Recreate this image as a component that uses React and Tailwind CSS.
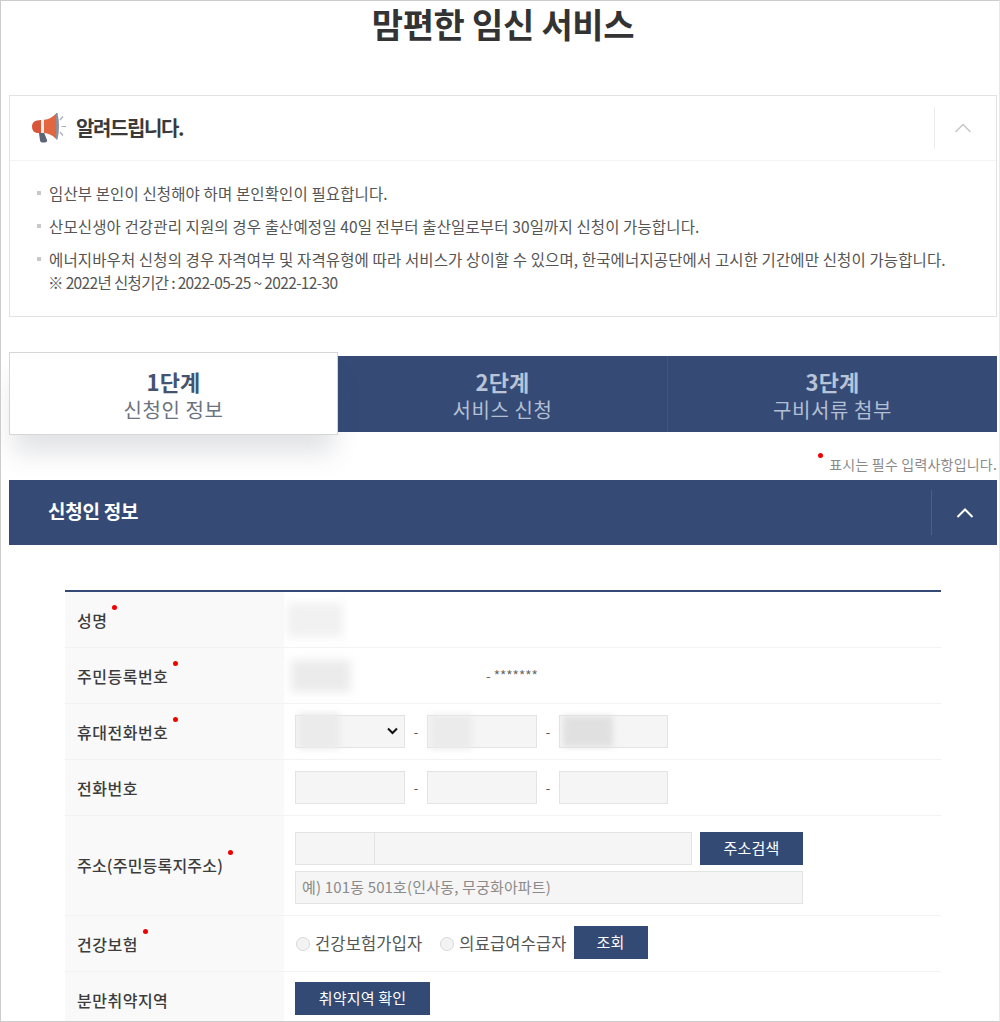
const Font = { fontFamily: '"Noto Sans CJK KR", "Noto Sans", sans-serif' };

function Megaphone() {
  return (
    <svg width="36" height="32" viewBox="0 0 36 32" className="shrink-0 -ml-[1px]">
      <path d="M8 21 L13 20.5 L16 28 Q16.5 30.5 13.5 30.5 L11 30.5 Q9.5 30.5 9 28.5 Z" fill="#5d6478" />
      <path d="M6 8.5 L10 8 L10 21 L6 21 Q1 20 1 14.5 Q1 9.5 6 8.5 Z" fill="#d9553a" />
      <path d="M10 8 L13 7.8 L13 21 L10 21 Z" fill="#f4efec" />
      <path d="M13 7.8 Q20 7 24.5 2 L25 2 L25 26.5 L24.5 26.5 Q20 21.5 13 21 Z" fill="#e2663f" />
      <path d="M25 1 L26.5 1 Q28 8 28 14 Q28 21 26.5 27.5 L25 27.5 Z" fill="#8a8f9c" />
      <path d="M29 8 L32 4.5 M30.5 14.5 L35 14.5 M29 20 L32 23.5" stroke="#a9adb5" strokeWidth="1.2" fill="none" />
    </svg>
  );
}

function Chevron({ color, width }) {
  return (
    <svg width="18" height="10" viewBox="0 0 18 10">
      <path d="M1.5 9 L9 1.5 L16.5 9" fill="none" stroke={color} strokeWidth={width} />
    </svg>
  );
}

function Dot() {
  return <span className="absolute top-[-3px] right-[-10px] w-[5px] h-[5px] rounded-full bg-[#f00000]" />;
}

function Label({ text, required, className = 'tracking-[0.5px]' }) {
  return (
    <div className="w-[219px] shrink-0 self-stretch bg-[#f9f9f9] flex items-center pl-[12px]">
      <span className={`relative text-[16px] font-medium text-[#3c3c3c] ${className}`}>
        {text}
        {required && <Dot />}
      </span>
    </div>
  );
}

function Row({ height, label, required, last, labelClass, children }) {
  return (
    <div className={`flex items-center ${height} ${last ? '' : 'border-b border-[#f3f3f3]'}`}>
      <Label text={label} required={required} className={labelClass} />
      <div className="flex-1 self-stretch flex items-center">{children}</div>
    </div>
  );
}

function Field({ className = 'w-[110px]', children }) {
  return <div className={`relative h-[33px] bg-[#f5f5f5] border border-[#e3e3e3] shrink-0 ${className}`}>{children}</div>;
}

function Dash() {
  return <span className="w-[22px] text-center text-[13px] text-[#555] shrink-0">-</span>;
}

function Blur({ className }) {
  return <div className={`absolute blur-[3px] ${className}`} />;
}

function Radio({ label }) {
  return (
    <div className="flex items-center gap-[5px]">
      <span className="w-[14px] h-[14px] rounded-full bg-[#f3f3f3] border border-[#d8d8d8]" />
      <span className="text-[16.5px] text-[#555] tracking-[0.15px]">{label}</span>
    </div>
  );
}

function Btn({ className, children }) {
  return (
    <div className={`h-[33px] bg-[#334a75] text-white text-[15px] flex items-center justify-center tracking-[0.2px] shrink-0 ${className}`}>
      {children}
    </div>
  );
}

function Bullet({ children, extra }) {
  return (
    <div className="flex items-start">
      <span className="w-[4px] h-[4px] bg-[#c8c8c8] mt-[7px] mr-[8px] shrink-0" />
      <div className="text-[15.5px] leading-[23px] text-[#555] tracking-[0.12px] -mt-[2px]">
        {children}
        {extra && <div className="tracking-[-0.65px] -ml-[1px]">{extra}</div>}
      </div>
    </div>
  );
}

function Step({ num, title, active, last }) {
  if (active) {
    return (
      <div className="relative z-10 w-[329px] h-[83px] bg-white border border-[#d6d6d6] shadow-[0_22px_24px_-4px_rgba(60,70,90,0.15)] flex flex-col items-center justify-center">
        <div className="text-[22px] leading-[32px] font-bold text-[#44536f] tracking-[0.2px]">{num}</div>
        <div className="text-[20px] leading-[26px] text-[#6b7280] tracking-[0.6px]">{title}</div>
      </div>
    );
  }
  return (
    <div className={`flex-1 h-[76px] mt-[4px] bg-[#354b76] flex flex-col items-center justify-center ${last ? '' : 'border-r border-[#3f5680]'}`}>
      <div className="text-[22px] leading-[32px] font-bold text-[#b9c4d6] tracking-[0.2px]">{num}</div>
      <div className="text-[20px] leading-[26px] text-[#b3bfd2] tracking-[0.6px]">{title}</div>
    </div>
  );
}

export default function App() {
  return (
    <div style={Font} className="w-[1000px] h-[1022px] overflow-hidden bg-white border-t border-b border-l border-r border-t-[#cccccc] border-b-[#cccccc] border-l-[#cccccc] border-r-[#e8e8e8] box-border pl-[8px] pr-[2px]">
      <h1 className="h-[94px] text-center text-[34px] leading-[46px] font-bold text-[#333] tracking-[-0.3px]">맘편한 임신 서비스</h1>

      <section className="h-[222px] border border-[#e2e2e2]">
        <div className="h-[65px] flex items-center border-b border-[#f3f3f3] pl-[22px]">
          <Megaphone />
          <span className="ml-[9px] text-[20px] font-bold text-[#3a3a3a] tracking-[-1.4px]">알려드립니다.</span>
          <div className="ml-auto h-[42px] w-[62px] border-l border-[#ececec] flex items-center justify-center pr-[6px]">
            <Chevron color="#c4c4c4" width="1.4" />
          </div>
        </div>
        <div className="pl-[27px] pt-[23px] flex flex-col gap-[12px]">
          <Bullet>임산부 본인이 신청해야 하며 본인확인이 필요합니다.</Bullet>
          <Bullet>산모신생아 건강관리 지원의 경우 출산예정일 40일 전부터 출산일로부터 30일까지 신청이 가능합니다.</Bullet>
          <Bullet extra="※ 2022년 신청기간 : 2022-05-25 ~ 2022-12-30">
            에너지바우처 신청의 경우 자격여부 및 자격유형에 따라 서비스가 상이할 수 있으며, 한국에너지공단에서 고시한 기간에만 신청이 가능합니다.
          </Bullet>
        </div>
      </section>

      <div className="mt-[35px] flex items-start h-[83px]">
        <Step num="1단계" title="신청인 정보" active />
        <Step num="2단계" title="서비스 신청" />
        <Step num="3단계" title="구비서류 첨부" last />
      </div>

      <div className="h-[45px] flex justify-end items-start pt-[19px]">
        <span className="relative text-[14px] leading-[20px] text-[#8a8a8a] tracking-[0.2px]">
          표시는 필수 입력사항입니다.
          <span className="absolute left-[-11px] top-[-1px] w-[5px] h-[5px] rounded-full bg-[#f00000]" />
        </span>
      </div>

      <div className="h-[65px] bg-[#354b76] flex items-center pl-[39px]">
        <span className="text-[19px] font-bold text-white tracking-[-0.25px] pb-[2px]">신청인 정보</span>
        <div className="ml-auto h-[45px] w-[66px] border-l border-[#47608c] flex items-center justify-center">
          <Chevron color="#ffffff" width="2" />
        </div>
      </div>

      <div className="ml-[56px] w-[876px] mt-[45px] border-t-2 border-[#354b76]">
        <Row height="h-[56px]" label="성명" required>
          <div className="ml-[3px] w-[56px] h-[34px] bg-[#f1f1f1] blur-[5px]" />
        </Row>
        <Row height="h-[56px]" label="주민등록번호" required>
          <div className="ml-[7px] w-[60px] h-[32px] bg-[#ebebeb] blur-[5px]" />
          <span className="ml-[135px] text-[13.5px] text-[#666]">- *******</span>
        </Row>
        <Row height="h-[56px]" label="휴대전화번호" required>
          <div className="ml-[11px] flex items-center">
            <Field>
              <Blur className="left-[2px] top-[-3px] w-[42px] h-[36px] bg-[#ebebeb]" />
              <svg className="absolute right-[6px] top-[11px]" width="11" height="8" viewBox="0 0 11 8">
                <path d="M1 1.5 L5.5 6 L10 1.5" fill="none" stroke="#111" strokeWidth="2" />
              </svg>
            </Field>
            <Dash />
            <Field>
              <Blur className="left-[2px] top-[-1px] w-[42px] h-[34px] bg-[#ebebeb]" />
            </Field>
            <Dash />
            <Field className="w-[109px]">
              <Blur className="left-[3px] top-[0px] w-[50px] h-[31px] bg-[#e0e0e0]" />
            </Field>
          </div>
        </Row>
        <Row height="h-[56px]" label="전화번호">
          <div className="ml-[11px] flex items-center">
            <Field />
            <Dash />
            <Field />
            <Dash />
            <Field className="w-[109px]" />
          </div>
        </Row>
        <Row height="h-[100px]" label="주소(주민등록지주소)" required labelClass="tracking-[0.2px] pb-[2px]">
          <div className="ml-[11px] pt-[4px] flex flex-col gap-[6px]">
            <div className="flex items-center">
              <Field className="w-[79px] border-r-0" />
              <Field className="w-[318px]" />
              <Btn className="w-[103px] ml-[8px]">주소검색</Btn>
            </div>
            <div className="h-[33px] w-[508px] bg-[#f5f5f5] border border-[#e3e3e3] flex items-center pl-[6px] text-[15px] text-[#8a8a8a] tracking-[0.16px]">
              예) 101동 501호(인사동, 무궁화아파트)
            </div>
          </div>
        </Row>
        <Row height="h-[56px]" label="건강보험" required>
          <div className="ml-[12px] flex items-center">
            <Radio label="건강보험가입자" />
            <div className="ml-[18px]">
              <Radio label="의료급여수급자" />
            </div>
            <Btn className="w-[74px] ml-[7px] -mt-[2px]">조회</Btn>
          </div>
        </Row>
        <Row height="h-[56px]" label="분만취약지역" last>
          <Btn className="w-[135px] ml-[11px] -mt-[3px]">취약지역 확인</Btn>
        </Row>
      </div>
    </div>
  );
}
